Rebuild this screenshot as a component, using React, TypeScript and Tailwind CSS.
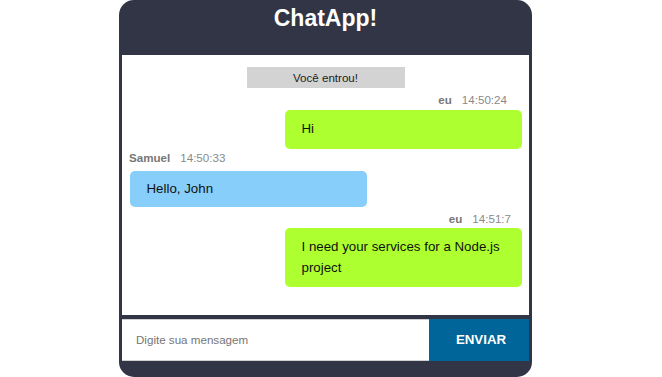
const messages = [
  { who: "eu", time: "14:50:24", text: "Hi", mine: true, metaMt: "mt-[5px]", bubbleMt: "mt-[3px]", pr: "pr-[22px]" },
  { who: "Samuel", time: "14:50:33", text: "Hello, John", mine: false, metaMt: "mt-[2px]", bubbleMt: "mt-[6px]", pr: "" },
  {
    who: "eu",
    time: "14:51:7",
    text: "I need your services for a Node.js project",
    mine: true,
    metaMt: "mt-[5px]",
    bubbleMt: "mt-[2px]",
    pr: "pr-[18px]",
  },
];

export default function App() {
  return (
    <div className="h-[377px] w-[662px] overflow-hidden bg-white font-['Liberation_Sans',Arial,sans-serif]">
      <div className="ml-[119px] flex h-[377px] w-[413px] flex-col rounded-[15px] bg-[#323545] px-[3px] pb-[16px]">
        {/* Header */}
        <div className="h-[55px] shrink-0 pt-[4px] text-center">
          <h1 className="text-[23px] font-bold leading-[28px] text-white">ChatApp!</h1>
        </div>

        {/* Messages */}
        <div className="flex h-[260px] shrink-0 flex-col bg-white">
          <div className="mx-auto mt-[12px] h-[21px] w-[158px] bg-[#d3d3d3] text-center text-[11.6px] leading-[21px] text-[#222]">
            Você entrou!
          </div>

          {messages.map((m, i) => (
            <div key={i} className="flex flex-col">
              <div
                className={`${m.metaMt} text-[11.6px] leading-[14px] ${
                  m.mine ? `text-right ${m.pr}` : "pl-[7px]"
                }`}
              >
                <span className="font-bold text-[#777]">{m.who}</span>
                <span className="ml-[10px] text-[#8a8a8a]">{m.time}</span>
              </div>
              <div
                className={`${m.bubbleMt} w-[237px] rounded-[5px] px-[16.5px] text-[13.3px] leading-[20.5px] text-[#111] ${
                  m.mine ? "ml-auto mr-[7px] bg-[#adff2f] py-[9px]" : "ml-[8px] bg-[#87cefa] py-[8px]"
                }`}
              >
                {m.text}
              </div>
            </div>
          ))}
        </div>

        {/* Input row */}
        <div className="mt-[4px] flex h-[42px] shrink-0">
          <input
            className="min-w-0 flex-1 border-y border-[#d0d0d0] bg-white pl-[14px] text-[11.6px] text-[#333] outline-none placeholder:text-[#757575]"
            placeholder="Digite sua mensagem"
          />
          <button className="w-[100px] shrink-0 bg-[#006699] pl-[4px] text-[13.3px] font-bold text-white">ENVIAR</button>
        </div>
      </div>
    </div>
  );
}
